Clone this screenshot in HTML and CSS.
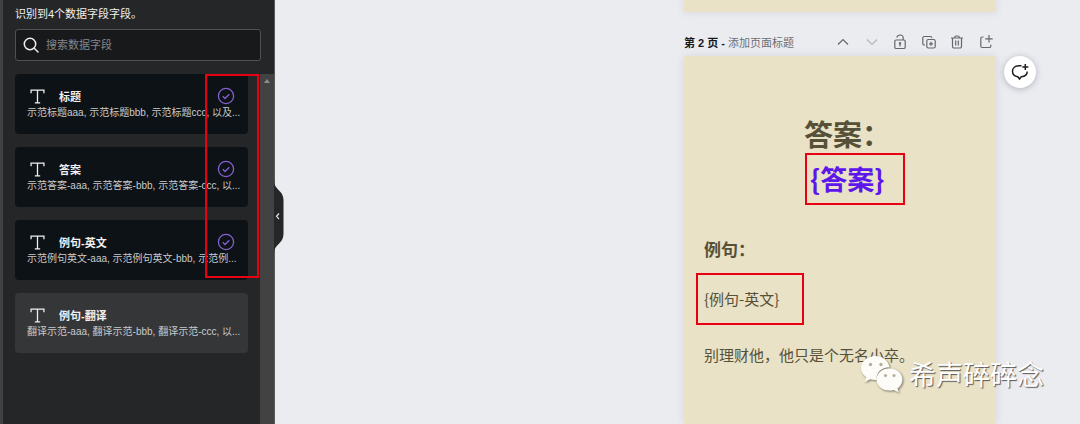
FILE: index.html
```html
<!DOCTYPE html>
<html lang="zh-CN">

<head>
    <meta charset="UTF-8" />
    <meta name="viewport" content="width=device-width, initial-scale=1.0" />
    <title>数据字段</title>
    <link rel="stylesheet" href="styles.css">
</head>

<body>
    <!-- shared icons -->
    <svg class="sprite" aria-hidden="true">
        <symbol id="icon-text" viewBox="0 0 14 14">
            <path d="M1 4V1h12v3M7 1v12M4.500 13h5" fill="none" stroke="currentColor" stroke-width="1.2" />
        </symbol>
        <symbol id="icon-check" viewBox="0 0 18 18">
            <circle cx="9" cy="9" r="7.600" fill="none" stroke="currentColor" stroke-width="1.300" />
            <path d="M5.800 9.300l2.200 2.200 4.300-4.300" fill="none" stroke="currentColor" stroke-width="1.300" />
        </symbol>
    </svg>

    <aside class="sidebar">
        <p class="summary">识别到4个数据字段字段。</p>
        <div class="search">
            <label for="search" aria-label="搜索数据字段">
                <svg width="16" height="16" viewBox="0 0 16 16" fill="none" stroke="currentColor" stroke-width="1.500">
                    <circle cx="7" cy="7" r="5.700" />
                    <path d="M11 11l4 4" stroke-linecap="round" />
                </svg>
            </label>
            <input type="text" id="search" placeholder="搜索数据字段">
        </div>

        <div class="fields">
            <div class="field-list">
                <button type="button" class="field">
                    <span class="field-head">
                        <svg class="icon-text"><use href="#icon-text" /></svg>
                        <span class="field-name">标题</span>
                        <svg class="icon-check"><use href="#icon-check" /></svg>
                    </span>
                    <span class="field-sample">示范标题aaa, 示范标题bbb, 示范标题ccc, 以及...</span>
                </button>
                <button type="button" class="field">
                    <span class="field-head">
                        <svg class="icon-text"><use href="#icon-text" /></svg>
                        <span class="field-name">答案</span>
                        <svg class="icon-check"><use href="#icon-check" /></svg>
                    </span>
                    <span class="field-sample">示范答案-aaa, 示范答案-bbb, 示范答案-ccc, 以...</span>
                </button>
                <button type="button" class="field">
                    <span class="field-head">
                        <svg class="icon-text"><use href="#icon-text" /></svg>
                        <span class="field-name">例句-英文</span>
                        <svg class="icon-check"><use href="#icon-check" /></svg>
                    </span>
                    <span class="field-sample">示范例句英文-aaa, 示范例句英文-bbb, 示范例...</span>
                </button>
                <button type="button" class="field field-free">
                    <span class="field-head">
                        <svg class="icon-text"><use href="#icon-text" /></svg>
                        <span class="field-name">例句-翻译</span>
                    </span>
                    <span class="field-sample">翻译示范-aaa, 翻译示范-bbb, 翻译示范-ccc, 以...</span>
                </button>
            </div>
            <div class="scrollbar">
                <svg width="6" height="4" viewBox="0 0 6 4"><path d="M0 4l3-4 3 4z" fill="#8b8c8d" /></svg>
            </div>
            <div class="mark mark-checks"></div>
        </div>

        <button type="button" class="collapse" aria-label="收起">
            <svg width="10" height="72" viewBox="0 0 10 72">
                <path d="M0 0C0 9 9.500 9 9.500 19v34C9.500 63 0 63 0 72z" fill="#252628" />
                <path d="M5 32.500L2.500 35.300 5 38" fill="none" stroke="#e4e4e6" stroke-width="1.200" />
            </svg>
        </button>
    </aside>

    <main class="workspace">
        <div class="pages">
            <div class="page page-prev"></div>
            <div class="page-bar">
                <h2><b>第 2 页 -</b> 添加页面标题</h2>
                <div class="tools">
                    <button type="button" aria-label="上移">
                        <svg viewBox="0 0 16 16"><path d="M3 10.500l5-5 5 5" /></svg>
                    </button>
                    <button type="button" aria-label="下移" disabled>
                        <svg viewBox="0 0 16 16"><path d="M3 5.500l5 5 5-5" /></svg>
                    </button>
                    <button type="button" aria-label="锁定">
                        <svg viewBox="0 0 16 16">
                            <rect x="2.800" y="6" width="10.400" height="8.500" rx="1.300" />
                            <path d="M4.800 3.500C5.200 1.800 6.500 1 8 1c1.900 0 3.200 1.300 3.200 3v2M8 9.500v3" />
                            <circle cx="8" cy="9.300" r=".6" />
                        </svg>
                    </button>
                    <button type="button" aria-label="复制页面">
                        <svg viewBox="0 0 16 16">
                            <rect x="5.800" y="5.500" width="8.400" height="8.500" rx="1.500" />
                            <path d="M4 11H3.300A1.500 1.500 0 0 1 1.800 9.500V4A1.500 1.500 0 0 1 3.300 2.500h6A1.500 1.500 0 0 1 10.800 4M10 7.800v4M8 9.800h4" />
                        </svg>
                    </button>
                    <button type="button" aria-label="删除页面">
                        <svg viewBox="0 0 16 16">
                            <path d="M2 4h12M5.800 4V3.300A1.300 1.300 0 0 1 7.100 2h1.800a1.300 1.300 0 0 1 1.300 1.300V4M3.500 4v8.500A1.500 1.500 0 0 0 5 14h6a1.500 1.500 0 0 0 1.500-1.500V4M6.700 6.500v5M9.300 6.500v5" />
                        </svg>
                    </button>
                    <button type="button" aria-label="添加页面">
                        <svg viewBox="0 0 16 16">
                            <path d="M5.500 3H4.300A1.500 1.500 0 0 0 2.800 4.500v7.500a1.500 1.500 0 0 0 1.500 1.500h7a1.500 1.500 0 0 0 1.500-1.500v-1.200M11 1v7.500M7.200 4.800h7.500" />
                        </svg>
                    </button>
                </div>
            </div>
            <article class="page page-current">
                <h1>答案：</h1>
                <p class="mark mark-answer">{答案}</p>
                <h3>例句：</h3>
                <p class="mark mark-sentence">{例句-英文}</p>
                <p class="translation">别理财他，他只是个无名小卒。</p>
            </article>
        </div>
        <button type="button" class="comment" aria-label="添加评论">
            <svg width="18" height="18" viewBox="0 0 18 18" fill="none" stroke="#1c1e22" stroke-width="1.500">
                <path d="M10.500 2.700H8C4.300 2.700 1.500 5 1.500 8.300c0 2.800 2.200 5 5.300 5.500L8.500 16l1.800-2.200c3.500-.4 5.900-2.400 5.900-5.300M14.300 1v6M11.300 4h6" />
            </svg>
        </button>

        <div class="watermark">
            <svg width="44" height="38" viewBox="0 0 44 38">
                <path d="M15.500 1C7.500 1 1 6.300 1 13c0 3.700 2 7 5.200 9.200L4.800 27l5.400-2.800c1.700.5 3.500.8 5.300.8h1.400C15.300 18 21.800 12 29.600 12.200 28.400 5.800 22.500 1 15.500 1z" />
                <path d="M29.500 13.500c-7.200 0-13 4.900-13 11s5.800 11 13 11c1.500 0 3-.2 4.300-.6l5 2.500-1.300-4c3-2 4.900-5.200 4.900-8.900 0-6.100-5.700-11-12.900-11z" />
                <g class="eyes">
                    <circle cx="10.500" cy="9.500" r="1.700" />
                    <circle cx="21" cy="9.500" r="1.700" />
                    <circle cx="25.500" cy="20.500" r="1.600" />
                    <circle cx="34" cy="20.500" r="1.600" />
                </g>
            </svg>
            <span>希声碎碎念</span>
        </div>
    </main>
</body>

</html>
```
FILE: styles.css
```css
* {
    box-sizing: border-box;
}

body {
    display: flex;
    height: 100vh;
    margin: 0;
    overflow: hidden;
    background-color: #ebecf0;
    font-family: "Liberation Sans", "Noto Sans CJK SC", sans-serif;
    font-size: 11px;
}

h1,
h2,
h3,
p {
    margin: 0;
}

button {
    padding: 0;
    border: none;
    background: none;
    color: inherit;
    font-family: inherit;
    cursor: pointer;
}

svg {
    display: block;
}

.sprite {
    position: absolute;
    width: 0;
    height: 0;
}

/* sidebar */
.sidebar {
    position: relative;
    display: flex;
    flex-direction: column;
    flex: none;
    width: 275px;
    padding: 6px 0 0 12px;
    border-left: 3px solid #414243;
    border-right: 1px solid #59595a;
    background-color: #252628;
    color: #f0f0f1;
}

.summary {
    line-height: 16px;
}

.search {
    display: flex;
    align-items: center;
    gap: 7px;
    height: 32px;
    margin: 7px 13px 13px 0;
    padding: 0 7px;
    border: 1px solid #505153;
    border-radius: 3px;
    background-color: #18191b;
}

.search input {
    flex: 1;
    min-width: 0;
    padding: 0;
    border: none;
    outline: none;
    background: none;
    color: #f0f0f1;
    font: inherit;
}

.search input::placeholder {
    color: #85868a;
}

.fields {
    position: relative;
    display: flex;
    flex: 1;
    justify-content: space-between;
}

.field-list {
    display: flex;
    flex-direction: column;
    gap: 13px;
    width: 233px;
}

.field {
    display: block;
    height: 60px;
    padding: 0 12px;
    border-radius: 4px;
    background-color: #0d1216;
    text-align: left;
}

.field-free {
    background-color: #353638;
}

.field-head {
    display: flex;
    align-items: center;
    height: 18px;
    padding: 0 1px 0 3px;
}

.icon-text {
    width: 15px;
    height: 15px;
    margin-right: 14px;
}

.icon-check {
    width: 18px;
    height: 18px;
    margin-left: auto;
    color: #8660d0;
}

.field-name {
    font-size: 11px;
    font-weight: bold;
}

.field-sample {
    display: block;
    color: #c9cacb;
    font-size: 10px;
    line-height: 16px;
    white-space: nowrap;
}

.scrollbar {
    display: flex;
    justify-content: center;
    width: 14px;
    padding-top: 5px;
    background-color: #424242;
}

.collapse {
    position: absolute;
    top: 181px;
    left: 100%;
    z-index: 1;
}

/* red frames */
.mark {
    border: 2px solid #e60012;
}

.mark-checks {
    position: absolute;
    top: 0;
    left: 190px;
    width: 54px;
    height: 204px;
}

/* canvas */
.workspace {
    position: relative;
    display: flex;
    flex: 1;
    justify-content: flex-end;
    align-items: flex-start;
    gap: 8px;
    padding-right: 44px;
}

.pages {
    display: flex;
    flex-direction: column;
    width: 312px;
    height: 100%;
}

.page {
    background-color: #e9e2c7;
    box-shadow: 0 0 8px rgba(60, 64, 90, 0.12);
}

.page-prev {
    flex: none;
    height: 12px;
}

.page-bar {
    display: flex;
    flex: none;
    align-items: center;
    justify-content: space-between;
    height: 44px;
    padding-top: 16px;
}

.page-bar h2 {
    color: #6b6d73;
    font-size: 11px;
    font-weight: normal;
}

.page-bar b {
    color: #17181c;
}

.tools {
    display: flex;
    justify-content: space-between;
    width: 161px;
    padding-right: 2px;
}

.tools svg {
    width: 16px;
    height: 16px;
    fill: none;
    stroke: #65676e;
    stroke-width: 1.2;
}

.tools button:disabled {
    opacity: 0.4;
}

.page-current {
    flex: 1;
    padding: 57px 12px 0;
    color: #565038;
    font-family: "Noto Sans CJK SC", sans-serif;
}

.page-current h1 {
    padding-left: 108px;
    font-size: 29px;
    line-height: 40px;
}

.mark-answer {
    width: 100px;
    height: 52px;
    margin: 0 0 32px 109px;
    padding-left: 3px;
    color: #5e17eb;
    font-size: 27px;
    font-weight: bold;
    line-height: 48px;
}

.page-current h3 {
    padding-left: 8px;
    font-size: 17px;
    line-height: 24px;
}

.mark-sentence {
    width: 108px;
    height: 52px;
    margin: 12px 0 18px;
    padding-left: 6px;
    font-size: 15px;
    line-height: 48px;
    white-space: nowrap;
}

.translation {
    padding-left: 8px;
    font-size: 15px;
    line-height: 24px;
}

.comment {
    display: flex;
    align-items: center;
    justify-content: center;
    width: 32px;
    height: 32px;
    margin-top: 56px;
    border-radius: 50%;
    background-color: #fff;
    box-shadow: 0 1px 6px rgba(40, 44, 70, 0.3);
}

.watermark {
    position: absolute;
    right: 36px;
    bottom: 30px;
    display: flex;
    align-items: center;
    gap: 5px;
    color: #fff;
    font-family: "Noto Sans CJK SC", sans-serif;
    font-size: 27px;
    line-height: 40px;
    text-shadow: 1px 1px 1px #555;
}

.watermark svg {
    fill: #fdfcf8;
    filter: drop-shadow(1px 1px 1px rgba(70, 70, 60, 0.7));
}

.watermark .eyes {
    fill: #b5b09c;
}
```
